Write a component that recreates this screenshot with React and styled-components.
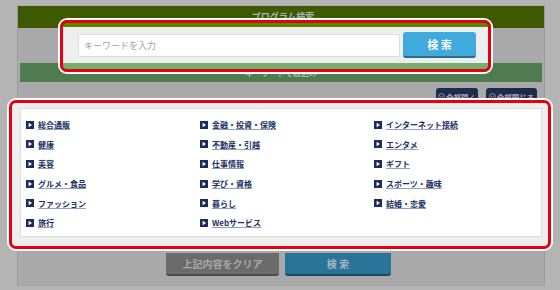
import React from 'react';
import styled, { createGlobalStyle } from 'styled-components';

const GlobalStyle = createGlobalStyle`
  html, body {
    margin: 0;
    padding: 0;
  }
  body {
    background: #b4b4b4;
    font-family: "Noto Sans CJK JP", "Noto Sans", sans-serif;
    width: 560px;
    height: 290px;
    overflow: hidden;
  }
`;

const columns = [
  ['総合通販', '健康', '美容', 'グルメ・食品', 'ファッション', '旅行'],
  ['金融・投資・保険', '不動産・引越', '仕事情報', '学び・資格', '暮らし', 'Webサービス'],
  ['インターネット接続', 'エンタメ', 'ギフト', 'スポーツ・趣味', '結婚・恋愛'],
];

const ArrowIcon = () => (
  <svg width='8' height='8' viewBox='0 0 8 8'>
    <rect width='8' height='8' fill='#1b2c5c' />
    <path d='M2.6 1.8 L6 4 L2.6 6.2 Z' fill='#fff' />
  </svg>
);

const ToggleIcon = () => (
  <svg width='7' height='7' viewBox='0 0 8 8'>
    <circle cx='4' cy='4' r='3.3' fill='none' stroke='#a9adb5' strokeWidth='0.9' />
    <path d='M2.4 3.3 L4 4.9 L5.6 3.3' fill='none' stroke='#a9adb5' strokeWidth='0.9' />
  </svg>
);

const App = () => {
  return (
    <>
      <GlobalStyle />
      <Page>
        <TopBar>プログラム検索</TopBar>

        <SearchRow>
          <SearchSpot>
            <TopStrip />
            <SearchBody>
              <KeywordInput placeholder='キーワードを入力' />
              <SearchButton>検 索</SearchButton>
            </SearchBody>
            <BottomStrip />
          </SearchSpot>
        </SearchRow>

        <SubBar>キーワードで絞込み</SubBar>

        <ToggleRow>
          <ToggleButton $w={42}>
            <ToggleIcon />
            全部開く
          </ToggleButton>
          <ToggleButton $w={51}>
            <ToggleIcon />
            全部閉じる
          </ToggleButton>
        </ToggleRow>

        <CategorySpot>
          <CategoryPanel>
            {columns.map((col, ci) =>
              col.map((name, ri) => (
                <CategoryItem key={name} style={{ gridColumn: ci + 1, gridRow: ri + 1 }}>
                  <ArrowIcon />
                  <CategoryLink href='#'>{name}</CategoryLink>
                </CategoryItem>
              ))
            )}
          </CategoryPanel>
        </CategorySpot>

        <ActionRow>
          <ActionButton $w={113} $bg='#6b6b6b' $edge='#4a4a4a' $color='#a9a9a9'>
            上記内容をクリア
          </ActionButton>
          <ActionButton $w={106} $bg='#2b7499' $edge='#1b4a62' $color='#a6b9c3'>
            検 索
          </ActionButton>
        </ActionRow>
      </Page>
    </>
  );
};

const Page = styled.div`
  box-sizing: border-box;
  width: 528px;
  height: 281px;
  margin: 5px 0 0 17px;
  padding-top: 1px;
  background: #a9a9a9;
  border-left: 1px solid #9b9b9b;
  border-right: 1px solid #9b9b9b;
  border-bottom: 1px solid #a2a2a2;
  display: flex;
  flex-direction: column;
`;
const TopBar = styled.div`
  height: 22px;
  background: #3e5a00;
  color: #b3b3b3;
  font-size: 9px;
  font-weight: 700;
  line-height: 22px;
  text-align: center;
  padding-left: 4px;
`;
const SearchRow = styled.div`
  height: 35px;
  display: flex;
  align-items: flex-start;
`;
const Spotlight = styled.div`
  box-sizing: border-box;
  position: relative;
  z-index: 2;
  border: 3px solid #e50012;
  border-radius: 7px;
  box-shadow: 0 0 0 2px #ffffff;
  overflow: hidden;
`;
const SearchSpot = styled(Spotlight)`
  width: 431px;
  margin: -8px 0 -9px 42px;
  display: flex;
  flex-direction: column;
`;
const TopStrip = styled.div`
  height: 4px;
  background: #5c8600;
`;
const SearchBody = styled.div`
  height: 36px;
  background: #eeeeee;
  display: flex;
  align-items: center;
  gap: 3px;
  padding: 0 12px 0 15px;
`;
const KeywordInput = styled.input`
  box-sizing: border-box;
  width: 322px;
  height: 23px;
  margin: 0;
  padding: 0 5px;
  border: 1px solid #dddddd;
  border-radius: 2px;
  background: #ffffff;
  font-family: inherit;
  font-size: 9px;
  outline: none;

  &::placeholder {
    color: #9f9f9f;
  }
`;
const SearchButton = styled.button`
  box-sizing: border-box;
  width: 73px;
  height: 26px;
  margin: 0;
  padding: 0;
  border: none;
  border-bottom: 2px solid #2a6b8c;
  border-radius: 3px;
  background: #40a9dd;
  color: #ffffff;
  font-family: inherit;
  font-size: 11px;
  font-weight: 700;
`;
const BottomStrip = styled.div`
  height: 6px;
  background: #71b071;
`;
const SubBar = styled.div`
  height: 19px;
  margin: 0 2px;
  background: #4e7c4e;
  color: #b3b3b3;
  font-size: 8px;
  font-weight: 700;
  line-height: 19px;
  text-align: center;
`;
const ToggleRow = styled.div`
  display: flex;
  justify-content: flex-end;
  gap: 8px;
  padding: 6px 7px 0 0;
`;
const ToggleButton = styled.div`
  width: ${(props) => props.$w}px;
  height: 18px;
  background: #1c2d4c;
  border-radius: 3px;
  color: #a9adb5;
  font-size: 7.5px;
  font-weight: 700;
  display: flex;
  align-items: flex-start;
  justify-content: center;
  gap: 1px;
  padding-top: 4px;
  box-sizing: border-box;

  svg {
    margin-top: 1px;
  }
`;
const CategorySpot = styled(Spotlight)`
  margin: -6px -7px 0 -9px;
  padding: 5px 6px 9px 8px;
  background: #eeeeee;
`;
const CategoryPanel = styled.div`
  background: #ffffff;
  border: 1px solid #dcdcdc;
  padding: 6px 0 3px 5px;
  display: grid;
  grid-template-columns: 174px 174px 1fr;
  grid-template-rows: repeat(6, 19.6px);
`;
const CategoryItem = styled.div`
  display: flex;
  align-items: center;
  gap: 4px;
`;
const CategoryLink = styled.a`
  color: #1b3063;
  font-size: 8px;
  font-weight: 700;
  white-space: nowrap;
  text-decoration: underline;
  text-decoration-color: #8ea2c3;
  text-underline-offset: 1px;
`;
const ActionRow = styled.div`
  display: flex;
  justify-content: center;
  gap: 6px;
  padding: 4px 5px 0 0;
`;
const ActionButton = styled.div`
  box-sizing: border-box;
  width: ${(props) => props.$w}px;
  height: 23px;
  background: ${(props) => props.$bg};
  border-bottom: 2px solid ${(props) => props.$edge};
  border-radius: 0 0 3px 3px;
  color: ${(props) => props.$color};
  font-size: 10px;
  font-weight: 700;
  display: flex;
  align-items: center;
  justify-content: center;
`;

export default App;
